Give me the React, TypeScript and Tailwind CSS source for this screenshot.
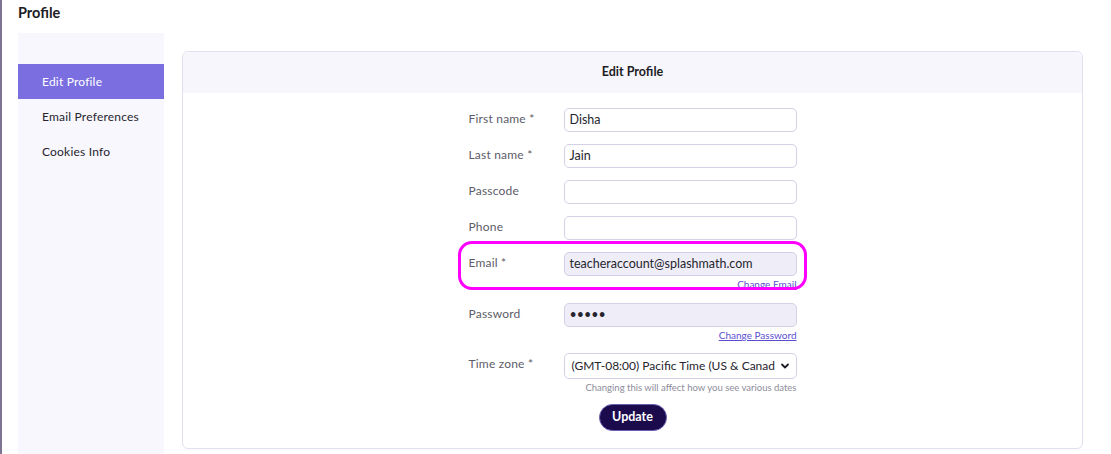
import React from 'react';

const font = { fontFamily: 'Lato, "Noto Sans", sans-serif' };

const Field: React.FC<{ label: string; value?: string; disabled?: boolean; link?: string; children?: React.ReactNode }> = ({ label, value, disabled, link, children }) => (
  <div className="flex items-start">
    <div className="w-[95px] shrink-0 pt-[2px] text-[12px] tracking-[0.2px] text-[#5c5c68]">{label}</div>
    <div className="flex w-[233px] flex-col items-end">
      {children ?? (
        <div
          className={`flex h-[24px] w-full items-center rounded-[5px] border border-[#d4d1e6] px-[5px] text-[12.5px] text-[#26252e] ${disabled ? 'bg-[#efedf8]' : 'bg-white'}`}
        >
          {value}
        </div>
      )}
      {link && <a className="mt-[3px] text-[10px] leading-[11px] text-[#5a4dd1] underline">{link}</a>}
    </div>
  </div>
);

export default function App() {
  return (
    <div className="min-h-[454px] border-l-2 border-[#7d7592] bg-white" style={font}>
      <div className="pl-[16px] pt-[4px] text-[14.5px] font-bold leading-[18px] text-[#1d1c24]">Profile</div>
      <div className="mt-[11px] flex gap-[18px] pl-[16px] pr-[28px]">
        <div className="h-[421px] w-[146px] shrink-0 bg-[#f8f7fd] pt-[31px]">
          <div className="flex h-[35px] items-center bg-[#7b6ee0] pl-[24px] text-[12px] tracking-[0.2px] text-white">Edit Profile</div>
          <div className="flex h-[35px] items-center pl-[24px] text-[12px] tracking-[0.2px] text-[#26252e]">Email Preferences</div>
          <div className="flex h-[35px] items-center pl-[24px] text-[12px] tracking-[0.2px] text-[#26252e]">Cookies Info</div>
        </div>
        <div className="mt-[18px] h-[398px] flex-1 rounded-[6px] border border-[#e2e0ee]">
          <div className="flex h-[41px] items-center justify-center rounded-t-[6px] bg-[#f7f6fc] text-[12.5px] font-bold text-[#1d1c24]">
            Edit Profile
          </div>
          <div className="flex flex-col items-center pt-[15px]">
            <div className="flex w-[328px] flex-col">
              <Field label="First name *" value="Disha" />
              <div className="h-[12px]" />
              <Field label="Last name *" value="Jain" />
              <div className="h-[12px]" />
              <Field label="Passcode" />
              <div className="h-[12px]" />
              <Field label="Phone" />
              <div className="h-[12px]" />
              <div className="relative">
                <Field label="Email *" value="teacheraccount@splashmath.com" disabled link="Change Email" />
                <div className="pointer-events-none absolute left-[-11px] top-[-11px] h-[49px] w-[349px] rounded-[14px] border-[3.5px] border-[#ff00ff]" />
              </div>
              <div className="h-[13px]" />
              <Field label="Password" value="•••••" disabled link="Change Password" />
              <div className="h-[12px]" />
              <Field label="Time zone *">
                <div className="flex h-[26px] w-full items-center justify-between rounded-[5px] border border-[#d4d1e6] bg-white pl-[7px] pr-[6px] text-[12px] text-[#26252e]">
                  <span className="whitespace-nowrap">(GMT-08:00) Pacific Time (US &amp; Canad</span>
                  <svg width="10" height="10" viewBox="0 0 10 10" className="shrink-0">
                    <path d="M2 3.5 L5 6.5 L8 3.5" fill="none" stroke="#1d1c24" strokeWidth="1.8" strokeLinecap="round" strokeLinejoin="round" />
                  </svg>
                </div>
                <div className="mt-[3px] text-[9.5px] leading-[11px] text-[#8d8c99]">Changing this will affect how you see various dates</div>
              </Field>
            </div>
            <button className="mt-[11px] flex h-[27px] w-[68px] items-center justify-center rounded-full border border-[#6a5fb0] bg-[#1b0b4c] text-[12.5px] font-bold text-white">
              Update
            </button>
          </div>
        </div>
      </div>
    </div>
  );
}
